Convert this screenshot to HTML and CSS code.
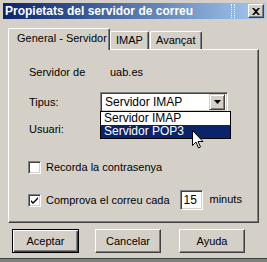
FILE: index.html
```html
<!DOCTYPE html>
<html lang="ca">
<head>
    <meta charset="UTF-8">
    <title>Propietats del servidor de correu</title>
    <link rel="stylesheet" href="styles.css">
</head>
<body>

    <div class="window">
        <div class="titlebar">
            <span class="title">Propietats del servidor de correu</span>
            <span class="grip"></span>
            <button class="close">
                <svg width="8" height="7" viewBox="0 0 8 7">
                    <path d="M0 0h2l2 2 2-2h2L5 3.5 8 7H6L4 5 2 7H0l3-3.5z" fill="#000"/>
                </svg>
            </button>
        </div>

        <div class="tabs">
            <div class="tab active">General - Servidor</div>
            <div class="tab tab-imap">IMAP</div>
            <div class="tab tab-adv">Avançat</div>
        </div>

        <div class="panel">
            <div class="row row-server">
                <span class="label">Servidor de</span>
                <span>uab.es</span>
            </div>
            <div class="row row-type">
                <span class="label">Tipus:</span>
                <div class="combo">
                    <span class="combo-text">Servidor IMAP</span>
                    <span class="combo-btn">
                        <svg width="7" height="4" viewBox="0 0 7 4"><path d="M0 0h7L3.5 4z" fill="#000"/></svg>
                    </span>
                </div>
                <ul class="dropdown">
                    <li>Servidor IMAP</li>
                    <li class="selected">Servidor POP3</li>
                </ul>
            </div>
            <div class="row row-user">
                <span class="label">Usuari:</span>
                <div class="field"></div>
            </div>
            <div class="row check-row first">
                <span class="check"></span>
                <span>Recorda la contrasenya</span>
            </div>
            <div class="row check-row">
                <span class="check">
                    <svg width="9" height="9" viewBox="0 0 9 9">
                        <path d="M1 4l2 2 5-5v2L3 8 1 6z" fill="#000"/>
                    </svg>
                </span>
                <span>Comprova el correu cada</span>
                <span class="num">15</span>
                <span class="unit">minuts</span>
            </div>
        </div>

        <div class="buttons">
            <button class="btn default">Aceptar</button>
            <button class="btn cancel">Cancelar</button>
            <button class="btn help">Ayuda</button>
        </div>

        <svg class="cursor" width="12" height="19" viewBox="0 0 12 19">
            <path d="M0.5 0.5v15l3.5-3.5 2.5 6 2-1-2.5-5.5h5z" fill="#fff" stroke="#000" stroke-width="1"/>
        </svg>
    </div>

</body>
</html>
```

FILE: styles.css
```css
body {
    margin: 0;
    background: #808080;
    font-family: "Liberation Sans", Arial, sans-serif;
    font-size: 11px;
    color: #000;
}

.window {
    position: relative;
    width: 267px;
    height: 259px;
    box-sizing: border-box;
    padding: 3px 1px 0 3px;
    background: #d4d0c8;
    border-bottom: 1px solid #404040;
}

/* title bar */
.titlebar {
    display: flex;
    align-items: center;
    height: 16px;
    padding-left: 2px;
    background: linear-gradient(to right, #0a246a, #a6caf0);
    color: #fff;
}
.title {
    font-weight: bold;
    font-size: 12px;
}
.grip {
    margin-left: auto;
    width: 2px;
    height: 14px;
    border-left: 1px dotted #fff;
    border-right: 1px dotted #fff;
    margin-right: 13px;
}
.close {
    display: flex;
    align-items: center;
    justify-content: center;
    width: 16px;
    height: 14px;
    padding: 0;
    margin-right: 2px;
    background: #d4d0c8;
    border: 1px solid;
    border-color: #fff #404040 #404040 #fff;
    box-shadow: inset -1px -1px #808080;
}

/* tabs */
.tabs {
    display: flex;
    align-items: flex-end;
    height: 21px;
    margin: 9px 0 0 5px;
}
.tab {
    position: relative;
    height: 18px;
    box-sizing: border-box;
    line-height: 16px;
    padding: 0 0 0 5px;
    border: 1px solid;
    border-bottom: none;
    border-color: #fff #404040 #fff #fff;
    border-radius: 2px 2px 0 0;
    box-shadow: inset -1px 0 #808080;
}
.tab.active {
    width: 102px;
    height: 22px;
    margin-bottom: -1px;
    padding-left: 8px;
    line-height: 19px;
    background: #d4d0c8;
    z-index: 1;
}
.tab-imap {
    width: 39px;
}
.tab-adv {
    width: 52px;
    margin-left: 1px;
}

.panel {
    width: 251px;
    height: 174px;
    box-sizing: border-box;
    margin-left: 5px;
    padding-left: 20px;
    border: 1px solid;
    border-color: #fff #404040 #404040 #fff;
    box-shadow: inset -1px -1px #808080;
}

.row {
    display: flex;
    align-items: center;
}
.row-server {
    height: 16px;
    margin-top: 14px;
}
.row-server .label {
    width: 81px;
}
.row-type {
    position: relative;
    height: 20px;
    margin-top: 12px;
}
.row-user {
    height: 20px;
    margin-top: 7px;
}
.row-type .label,
.row-user .label {
    width: 71px;
}

.combo,
.field,
.num {
    box-sizing: border-box;
    height: 20px;
    background: #fff;
    border: 1px solid;
    border-color: #808080 #fff #fff #808080;
    box-shadow: inset 1px 1px #404040, inset -1px -1px #d4d0c8;
}
.combo {
    display: flex;
    align-items: center;
    width: 128px;
    padding: 2px;
    font-size: 12px;
}
.combo-text {
    flex: 1;
    padding-left: 2px;
}
.combo-btn {
    display: flex;
    align-items: center;
    justify-content: center;
    width: 16px;
    height: 16px;
    box-sizing: border-box;
    background: #d4d0c8;
    border: 1px solid;
    border-color: #d4d0c8 #404040 #404040 #d4d0c8;
    box-shadow: inset 1px 1px #fff, inset -1px -1px #808080;
}
.field {
    width: 128px;
}

.dropdown {
    position: absolute;
    top: 19px;
    left: 71px;
    width: 129px;
    margin: 0;
    padding: 0;
    list-style: none;
    background: #fff;
    border: 1px solid #000;
    font-size: 12px;
    z-index: 2;
}
.dropdown li {
    height: 13px;
    line-height: 13px;
    padding-left: 3px;
}
.dropdown li.selected {
    background: #0a246a;
    color: #fff;
}

.check-row {
    height: 14px;
}
.check-row.first {
    margin-top: 21px;
}
.check-row:last-child {
    height: 20px;
    margin-top: 16px;
}
.check {
    display: flex;
    align-items: center;
    justify-content: center;
    width: 13px;
    height: 13px;
    box-sizing: border-box;
    margin-left: -1px;
    margin-right: 5px;
    background: #fff;
    border: 1px solid;
    border-color: #808080 #fff #fff #808080;
    box-shadow: inset 1px 1px #404040, inset -1px -1px #d4d0c8;
}
.num {
    width: 23px;
    margin-left: 10px;
    padding-left: 3px;
    line-height: 18px;
    font-size: 12px;
}
.unit {
    margin-left: 7px;
    margin-top: -3px;
}

/* bottom buttons */
.buttons {
    display: flex;
    margin-top: 6px;
    padding-left: 9px;
}
.btn {
    height: 24px;
    width: 66px;
    padding: 0;
    font-family: inherit;
    font-size: 11px;
    background: #d4d0c8;
    border: 1px solid;
    border-color: #fff #404040 #404040 #fff;
    box-shadow: inset -1px -1px #808080;
}
.btn.default {
    width: 67px;
    border-color: #000;
    box-shadow: inset 1px 1px #fff, inset -1px -1px #404040, inset -2px -2px #808080;
}
.btn.cancel {
    margin-left: 16px;
}
.btn.help {
    margin-left: 18px;
}

.cursor {
    position: absolute;
    left: 192px;
    top: 130px;
    z-index: 3;
}
```
